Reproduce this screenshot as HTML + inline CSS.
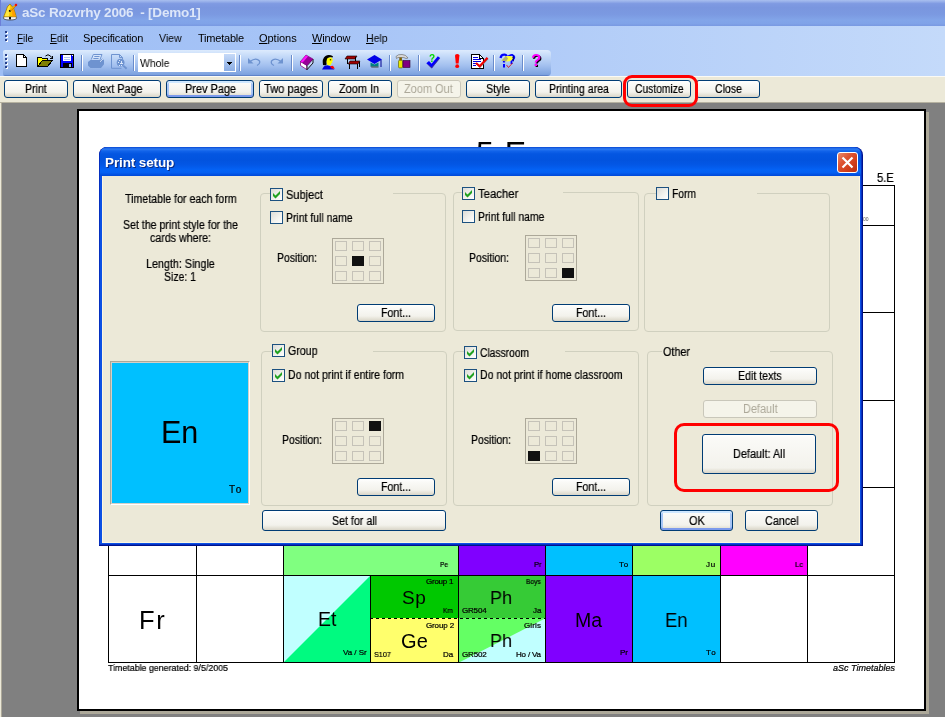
<!DOCTYPE html><html><head><meta charset="utf-8"><title>aSc Rozvrhy 2006 - [Demo1]</title><style>
html,body{margin:0;padding:0}
body{width:945px;height:717px;overflow:hidden;position:relative;background:#808080;font-family:"Liberation Sans",sans-serif;font-size:11px;color:#000}
div,svg{position:absolute;box-sizing:border-box}
.t{white-space:pre;will-change:transform}
.btn{border:1px solid #003C74;border-radius:3px;background:linear-gradient(#fff 0,#FAFAF7 3px,#F3F2EC calc(100% - 5px),#E9E7DD calc(100% - 3px),#D9D5C8 100%)}
.btn.dis{border-color:#C9C7BA;background:#F5F4EA}
.btn.def{box-shadow:inset 0 2px 0 0 #CEE7FF, inset 0 -2px 0 0 #7C9AEC, inset 2px 0 0 0 #A8C6F5, inset -2px 0 0 0 #A8C6F5}
.gb{border:1px solid #D0D0BF;border-radius:4px}
.cb{width:13px;height:13px;border:1px solid #1C5180;background:linear-gradient(135deg,#DCDCD7 0,#F3F3EF 60%,#fff 100%)}
.pg{border:1px solid #ACA899;background:#ECE9D8}
.pc{width:12px;height:10px;border:1px solid #C5C2B8}
.pc.on{background:#111;border-color:#111}
.sep{width:1px;background:#6A8CCB;box-shadow:1px 0 0 #fff}
</style></head><body><div style="left:0px;top:0px;width:945px;height:26px;background:linear-gradient(#A9BFEF 0,#98B0EA 6%,#7F9AE2 14%,#7A96DF 30%,#7B99E1 55%,#82A5E9 78%,#80A3E8 90%,#7999E2 100%)"></div><div style="left:0px;top:0px;width:1px;height:26px;background:#6C7FD8"></div><svg style="left:0;top:0" width="24" height="26" viewBox="0 0 24 26">
<path d="M3.4 17.8 Q3.2 20 10 20 Q16.8 20 16.6 17.8 L15 16 H5 Z" fill="#F4F4F4" stroke="#303030" stroke-width="0.7"/>
<path d="M10 4 L7.5 6.5 L5.6 12 L3.6 16.8 H16.3 L15 12.5 L13.6 8.2 Z" fill="#FFC400" stroke="#8A6A00" stroke-width="0.6"/>
<path d="M10 4.5 L8 7 L6.2 12 L4.6 16.2 H9 Z" fill="#FFE840"/>
<path d="M12 9 L13.3 8.6 L14.6 12.6 L15.8 16.4 H12.5 Z" fill="#FF9C00"/>
<rect x="9" y="17" width="2" height="2.4" fill="#111"/>
<path d="M9.8 10.8 L15.6 5.2" stroke="#F0A800" stroke-width="1.7"/>
<path d="M10.4 11.4 L16.2 5.8" stroke="#A06000" stroke-width="0.5"/>
<circle cx="16" cy="4.9" r="1.25" fill="#F01010"/>
<path d="M8.9 10.3 Q9.2 9.6 10.3 10.2 L10.8 11.6 Q9.6 12.2 8.9 11.4 Z" fill="#000"/>
</svg><div class="t" style="left:21.79px;top:5.32px;height:16px;line-height:16px;font-size:13.5px;color:#DCE6F9;letter-spacing:-0.224px;font-weight:bold;">aSc Rozvrhy 2006  - [Demo1]</div><div style="left:0px;top:26px;width:945px;height:50px;background:linear-gradient(90deg,#9EBEF5 0,#A9C6F7 40%,#C4DAFA 100%)"></div><div style="left:5px;top:31px;width:2px;height:2px;background:#27418C;box-shadow:1px 1px 0 #fff"></div><div style="left:5px;top:35px;width:2px;height:2px;background:#27418C;box-shadow:1px 1px 0 #fff"></div><div style="left:5px;top:39px;width:2px;height:2px;background:#27418C;box-shadow:1px 1px 0 #fff"></div><div class="t" style="left:17.34px;top:31.69px;height:13px;line-height:13px;font-size:11px;color:#000;transform:scaleX(0.9138);transform-origin:left center;"><u>F</u>ile</div><div class="t" style="left:49.54px;top:31.69px;height:13px;line-height:13px;font-size:11px;color:#000;transform:scaleX(0.9402);transform-origin:left center;"><u>E</u>dit</div><div class="t" style="left:83.34px;top:31.69px;height:13px;line-height:13px;font-size:11px;color:#000;letter-spacing:-0.165px;">Specification</div><div class="t" style="left:159.14px;top:31.69px;height:13px;line-height:13px;font-size:11px;color:#000;transform:scaleX(0.9576);transform-origin:left center;">View</div><div class="t" style="left:197.54px;top:31.69px;height:13px;line-height:13px;font-size:11px;color:#000;letter-spacing:-0.211px;">Timetable</div><div class="t" style="left:258.94px;top:31.69px;height:13px;line-height:13px;font-size:11px;color:#000;letter-spacing:-0.037px;"><u>O</u>ptions</div><div class="t" style="left:312.04px;top:31.69px;height:13px;line-height:13px;font-size:11px;color:#000;letter-spacing:-0.145px;"><u>W</u>indow</div><div class="t" style="left:366.04px;top:31.69px;height:13px;line-height:13px;font-size:11px;color:#000;transform:scaleX(0.9570);transform-origin:left center;"><u>H</u>elp</div><div style="left:3px;top:50px;width:548px;height:26px;border-radius:2px 4px 4px 2px;background:linear-gradient(#DDEBFD 0,#C3D9F8 25%,#A3C0EF 60%,#82A6E1 90%,#7A9EDC 96%,#5F83C9 97%,#5F83C9 100%)"></div><div style="left:5px;top:54px;width:2px;height:2px;background:#27418C;box-shadow:1px 1px 0 #fff"></div><div style="left:5px;top:58px;width:2px;height:2px;background:#27418C;box-shadow:1px 1px 0 #fff"></div><div style="left:5px;top:62px;width:2px;height:2px;background:#27418C;box-shadow:1px 1px 0 #fff"></div><div style="left:5px;top:66px;width:2px;height:2px;background:#27418C;box-shadow:1px 1px 0 #fff"></div><div class="sep" style="left:81px;top:55px;width:1px;height:16px;"></div><div class="sep" style="left:133px;top:55px;width:1px;height:16px;"></div><div class="sep" style="left:239px;top:55px;width:1px;height:16px;"></div><div class="sep" style="left:291px;top:55px;width:1px;height:16px;"></div><div class="sep" style="left:389px;top:55px;width:1px;height:16px;"></div><div class="sep" style="left:418px;top:55px;width:1px;height:16px;"></div><div class="sep" style="left:493px;top:55px;width:1px;height:16px;"></div><div class="sep" style="left:522px;top:55px;width:1px;height:16px;"></div><svg style="left:0;top:50px" width="560" height="26" viewBox="0 50 560 26" shape-rendering="crispEdges">
<!-- new -->
<path d="M16.5 54.5 H23.5 L26.5 57.5 V66.5 H16.5 Z" fill="#fff" stroke="#000"/>
<path d="M23.5 54.5 V57.5 H26.5" fill="none" stroke="#000"/>
<!-- open -->
<path d="M37.5 66.5 V57.5 H41.5 L42.5 58.5 H47.5 V60.5" fill="#FFFF00" stroke="#000"/>
<path d="M38 66 V58 H41 L42 59 H47 V61 H42 L38 66Z" fill="#FFFF00"/>
<path d="M37.5 66.5 L42.5 60.5 H52.5 L47.5 66.5 Z" fill="#808000" stroke="#000"/>
<path d="M45.5 56 Q48 53.5 50.5 56 L51.5 57.5" fill="none" stroke="#000" shape-rendering="auto"/>
<path d="M49.5 58.5 H52.5 V55.5" fill="none" stroke="#000"/>
<!-- save -->
<rect x="60.5" y="54.5" width="13" height="13" fill="#0000FF" stroke="#000"/>
<rect x="63" y="55" width="8" height="6" fill="#fff"/>
<rect x="64" y="57" width="6" height="1" fill="#B0C4F0"/><rect x="64" y="59" width="6" height="1" fill="#B0C4F0"/>
<rect x="63" y="63" width="9" height="4" fill="#000"/>
<rect x="69" y="64" width="2" height="3" fill="#8AB0F0"/>
<rect x="72" y="55" width="1" height="1" fill="#fff"/>
<!-- print (disabled) -->
<g fill="#6E93D0" shape-rendering="auto">
<path d="M91.3 59.5 L93.3 54.5 H102 L100 59.5" fill="#D5E4FA" stroke="#6E93D0" stroke-width="1"/>
<path d="M94.3 56.5 H99.5 M93.4 58.5 H98.6" stroke="#6E93D0" stroke-width="1"/>
<path d="M88 62 L90.5 60 H100 L102.5 58.6 L104 60.3 V64.3 L101 68 H90.5 L88 65.6 Z"/>
</g>
<path d="M100 61.8 L103.2 58.8" stroke="#DCE8FB" stroke-width="0.9" shape-rendering="auto"/>
<!-- preview (disabled) -->
<g shape-rendering="auto" fill="none" stroke="#6E93D0">
<path d="M111.5 54.5 H119.5 L122.5 57.5 V59.5 M111.5 54.5 V68.3 H121.5" />
<path d="M119.5 54.5 V57.5 H122.5"/>
<circle cx="120.6" cy="62.6" r="3.9" fill="#6E93D0" stroke="none"/>
<path d="M123.3 65.6 L126.6 68.8" stroke-width="1.9"/>
</g>
<g fill="#DCE8FB"><rect x="119" y="60" width="1" height="1"/><rect x="121" y="61" width="1" height="2"/><rect x="118" y="62" width="1" height="1"/><rect x="120" y="63" width="2" height="1"/><rect x="122" y="63" width="1" height="1"/><rect x="119" y="65" width="1" height="1"/><rect x="121" y="65" width="1" height="1"/></g>
<!-- undo / redo (disabled) -->
<g shape-rendering="auto" fill="none" stroke="#6E93D0" stroke-width="1.3">
<path d="M250 61.5 Q256 57 259.5 61 Q260.5 64 257 65.5"/>
<path d="M248 58 V63.5 H253.5 Z" fill="#6E93D0" stroke="none"/>
<path d="M281 61.5 Q275 57 271.5 61 Q270.5 64 274 65.5"/>
<path d="M283 58 V63.5 H277.5 Z" fill="#6E93D0" stroke="none"/>
</g>
<!-- book -->
<g shape-rendering="auto">
<path d="M300.5 61.5 L307 65.5 V69.7 L300.5 65.5 Z" fill="#fff" stroke="#8B008B" stroke-width="0.8"/>
<path d="M307 65.5 L313 59 V63 L307 69.7 Z" fill="#C5D6F5" stroke="#000" stroke-width="0.9"/>
<path d="M306 55 L313 59 L307 65.5 L300.5 61.5 Z" fill="#990099" stroke="#7A007A" stroke-width="0.6"/>
<path d="M306 55.3 L300.8 61.4 L302.6 62.5 L308 56.4 Z" fill="#FF10FF"/>
</g>
<!-- teacher -->
<g shape-rendering="auto">
<path d="M323 65 Q321.8 58.5 325.5 56 Q329 54 333 56.3 L332.5 57.6 Q328.5 56.5 327 59.5 L326.3 65.5 Z" fill="#000"/>
<path d="M327 58.8 Q329.5 56.8 331.8 57.8 L333 60.5 L332 61.2 L332.6 62.6 L331.3 63 L331 65 L327.5 65.5 L326.5 62 Z" fill="#FFFF00"/>
<path d="M329.8 59.3 h1.4 v1 h-1.4z" fill="#000"/>
<path d="M322 69.5 L324 66.3 L327.5 65.3 L331 66.5 L334.5 69.5 Z" fill="#0000E0"/>
<path d="M330 66.3 L333 65.8 L334.8 68.8 L331.5 68.6 Z" fill="#FF0000"/>
</g>
<!-- desks -->
<path d="M347 56 H357 L355 59 H345 Z" fill="#A00000" stroke="#000" stroke-width="0.6" shape-rendering="auto"/>
<path d="M350 61 H360 L358 64 H348 Z" fill="#A00000" stroke="#000" stroke-width="0.6" shape-rendering="auto"/>
<rect x="347" y="59" width="1" height="5" fill="#000"/><rect x="355" y="57" width="1" height="4" fill="#000"/>
<rect x="349" y="64" width="1" height="5" fill="#000"/><rect x="357" y="64" width="1" height="5" fill="#000"/><rect x="359" y="62" width="1" height="5" fill="#000"/>
<!-- grad cap -->
<g shape-rendering="auto">
<path d="M367 59.5 L374.5 55 L382 59.5 L374.5 64 Z" fill="#0000E8"/>
<path d="M370.5 62.5 V66.5 H378.5 V62.5 L374.5 64.6 Z" fill="#008080"/>
<path d="M370.5 66.5 H378.5 V67.5 H371.5 Z" fill="#404040"/>
<path d="M381 60 V67" stroke="#000090" stroke-width="1"/>
</g>
<!-- hammer + box -->
<g shape-rendering="auto">
<path d="M396 56.5 Q398 54 402 54.5 Q406 54.5 408 58 L406 58.5 Q404 57 401 57.5 L398 57.5 L396.5 58.5 Z" fill="#D8D8D8" stroke="#606060" stroke-width="0.6"/>
<rect x="399.3" y="57.5" width="2.6" height="3" fill="#806000"/>
<rect x="398.5" y="60.3" width="4" height="7.6" rx="1" fill="#E8E800" stroke="#505000" stroke-width="0.6"/>
<rect x="403" y="60.5" width="7" height="7" fill="#800080" stroke="#300030" stroke-width="0.6"/>
</g>
<!-- check with ? -->
<g shape-rendering="auto">
<path d="M426.3 63.3 L429 61 L431.6 63.8 L437.8 56.3 L440.2 58 L431.8 68.6 Z" fill="#0000FF"/>
<path d="M428 64.5 L431.5 68 L439.5 58.5" stroke="#806020" stroke-width="0.5" fill="none"/>
</g>
<!-- exclamation -->
<g shape-rendering="auto" fill="#FF0000">
<path d="M455 55.6 Q455 54 457.2 54 Q459.4 54 459.4 55.6 L458.6 63.6 H455.8 Z"/>
<circle cx="457.2" cy="66.2" r="1.9"/>
</g>
<!-- doc with check -->
<path d="M471.5 54.5 H479.5 L483.5 58.5 V68.5 H471.5 Z" fill="#fff" stroke="#000"/>
<path d="M479.5 54.5 V58.5 H483.5" fill="none" stroke="#000"/>
<path d="M473 57.5 H478 M473 59.5 H481 M473 61.5 H481 M473 63.5 H477 M473 65.5 H476" stroke="#0000E0"/>
<path d="M476.5 63.8 L480 67 L488 58.5" fill="none" stroke="#808080" stroke-width="1.4" shape-rendering="auto"/><path d="M476 63 L479.7 66.3 L487.5 57.8" fill="none" stroke="#F00000" stroke-width="2.1" shape-rendering="auto"/>
<!-- misc icon -->
<g shape-rendering="auto">
<path d="M500.5 58 Q501 54.5 504.5 54.5 Q507.5 55 506.5 58 L504 60.5 V62.5" fill="none" stroke="#0000FF" stroke-width="2.2"/>
<path d="M508 57 Q510 54.5 512.5 55 Q515 56 514 58.5 L511.5 61 V64" fill="none" stroke="#0000FF" stroke-width="1.8"/>
<rect x="503" y="64" width="2" height="3.5" fill="#0000FF"/>
<path d="M514 55 V62 L511.5 58 Z" fill="#000090"/>
<path d="M501.5 60.5 L506 56 H510.5 L513 58 L511.5 60.5 L507.5 61.5 Z" fill="#FFFF30"/>
<path d="M501.5 60.5 L506 56 L508 58.5 L506 61.5Z" fill="#B0B070"/>
<path d="M506.5 65 L508.5 67.5 L512.5 63" fill="none" stroke="#E00000" stroke-width="0.8"/>
</g>
</svg><div class="t" style="left:429.20px;top:52.53px;height:12px;line-height:12px;font-size:10px;color:#00D800;font-weight:bold;">?</div><div class="t" style="left:531.98px;top:52.11px;height:20px;line-height:20px;font-size:17px;color:#000;font-weight:bold;">?</div><div class="t" style="left:530.98px;top:51.11px;height:20px;line-height:20px;font-size:17px;color:#FF00FF;font-weight:bold;">?</div><div style="left:138px;top:53px;width:98px;height:19px;background:#fff"></div><div style="left:224px;top:54px;width:11px;height:17px;background:linear-gradient(#C6DAF8,#8BADE4)"></div><svg style="left:227px;top:62px" width="5" height="3" viewBox="0 0 5 3" shape-rendering="crispEdges"><path d="M0 0H5L2.5 3Z" fill="#000"/></svg><div class="t" style="left:139.84px;top:56.69px;height:13px;line-height:13px;font-size:11px;color:#000;transform:scaleX(0.9472);transform-origin:left center;">Whole</div><div style="left:0px;top:76px;width:945px;height:27px;background:#ECE9D8;border-top:1px solid #FBFAF4;border-bottom:1px solid #B5B1A0"></div><div class="btn" style="left:4px;top:80px;width:64px;height:18px;"></div><div class="t" style="left:24.93px;top:81.84px;height:14px;line-height:14px;font-size:12px;color:#000;transform:scaleX(0.8813);transform-origin:left center;-webkit-text-stroke:0.22px #000;">Print</div><div class="btn" style="left:73px;top:80px;width:88px;height:18px;"></div><div class="t" style="left:91.93px;top:81.84px;height:14px;line-height:14px;font-size:12px;color:#000;transform:scaleX(0.9025);transform-origin:left center;-webkit-text-stroke:0.22px #000;">Next Page</div><div class="btn def" style="left:166px;top:80px;width:88px;height:18px;"></div><div class="t" style="left:184.68px;top:81.84px;height:14px;line-height:14px;font-size:12px;color:#000;transform:scaleX(0.9116);transform-origin:left center;-webkit-text-stroke:0.22px #000;">Prev Page</div><div class="btn" style="left:259px;top:80px;width:64px;height:18px;"></div><div class="t" style="left:264.08px;top:81.84px;height:14px;line-height:14px;font-size:12px;color:#000;transform:scaleX(0.9253);transform-origin:left center;-webkit-text-stroke:0.22px #000;">Two pages</div><div class="btn" style="left:328px;top:80px;width:64px;height:18px;"></div><div class="t" style="left:339.08px;top:81.84px;height:14px;line-height:14px;font-size:12px;color:#000;transform:scaleX(0.9109);transform-origin:left center;-webkit-text-stroke:0.22px #000;">Zoom In</div><div class="btn dis" style="left:397px;top:80px;width:64px;height:18px;"></div><div class="t" style="left:403.73px;top:81.84px;height:14px;line-height:14px;font-size:12px;color:#ACA899;transform:scaleX(0.9145);transform-origin:left center;">Zoom Out</div><div class="btn" style="left:466px;top:80px;width:64px;height:18px;"></div><div class="t" style="left:485.73px;top:81.84px;height:14px;line-height:14px;font-size:12px;color:#000;transform:scaleX(0.8985);transform-origin:left center;-webkit-text-stroke:0.22px #000;">Style</div><div class="btn" style="left:535px;top:80px;width:87px;height:18px;"></div><div class="t" style="left:548.63px;top:81.84px;height:14px;line-height:14px;font-size:12px;color:#000;transform:scaleX(0.8811);transform-origin:left center;-webkit-text-stroke:0.22px #000;">Printing area</div><div class="btn" style="left:627px;top:80px;width:64px;height:18px;"></div><div class="t" style="left:634.88px;top:81.84px;height:14px;line-height:14px;font-size:12px;color:#000;transform:scaleX(0.8579);transform-origin:left center;-webkit-text-stroke:0.22px #000;">Customize</div><div class="btn" style="left:696px;top:80px;width:64px;height:18px;"></div><div class="t" style="left:714.83px;top:81.84px;height:14px;line-height:14px;font-size:12px;color:#000;transform:scaleX(0.8783);transform-origin:left center;-webkit-text-stroke:0.22px #000;">Close</div><div style="left:0px;top:103px;width:2px;height:614px;background:#ECE9D8"></div><div style="left:1px;top:103px;width:1px;height:614px;background:#ACA899"></div><div style="left:80px;top:112px;width:849px;height:602px;background:#ACA899"></div><div style="left:77px;top:109px;width:849px;height:602px;background:#fff;border:2px solid #000"></div><div class="t" style="left:476.08px;top:133.91px;height:38px;line-height:38px;font-size:32px;color:#000;letter-spacing:1.084px;">5.E</div><div class="t" style="left:876.88px;top:170.84px;height:14px;line-height:14px;font-size:12px;color:#000;transform:scaleX(0.9277);transform-origin:left center;-webkit-text-stroke:0.22px #000;">5.E</div><div class="t" style="left:863.20px;top:216.27px;height:6px;line-height:6px;font-size:5px;color:#555;letter-spacing:-0.062px;">00</div><div style="left:283px;top:540px;width:176px;height:36px;background:#80FF80;"></div><div style="left:458px;top:540px;width:88px;height:36px;background:#8000FF;"></div><div style="left:545px;top:540px;width:88px;height:36px;background:#00C0FF;"></div><div style="left:632px;top:540px;width:89px;height:36px;background:#9CFF64;"></div><div style="left:720px;top:540px;width:88px;height:36px;background:#FF00FF;"></div><div style="left:283px;top:575px;width:88px;height:88px;background:#C0FFFF;"></div><svg style="left:283px;top:575px" width="88" height="88" viewBox="0 0 88 88"><path d="M88 0 V88 H0 Z" fill="#00FA80"/></svg><div style="left:370px;top:575px;width:89px;height:44px;background:#00C800;"></div><div style="left:370px;top:618px;width:89px;height:45px;background:#FFFF6C;"></div><div style="left:458px;top:575px;width:88px;height:44px;background:#36CB36;"></div><div style="left:458px;top:618px;width:88px;height:45px;background:#64FF64;"></div><svg style="left:458px;top:618px" width="88" height="45" viewBox="0 0 88 45"><path d="M88 0 V45 H0 Z" fill="#C0FFFF"/></svg><div style="left:545px;top:575px;width:88px;height:88px;background:#8000FF;"></div><div style="left:632px;top:575px;width:89px;height:88px;background:#00C0FF;"></div><div style="left:108px;top:185px;width:1px;height:478px;background:#000"></div><div style="left:196px;top:185px;width:1px;height:478px;background:#000"></div><div style="left:283px;top:185px;width:1px;height:478px;background:#000"></div><div style="left:370px;top:575px;width:1px;height:88px;background:#000"></div><div style="left:458px;top:185px;width:1px;height:478px;background:#000"></div><div style="left:545px;top:185px;width:1px;height:478px;background:#000"></div><div style="left:632px;top:185px;width:1px;height:478px;background:#000"></div><div style="left:720px;top:185px;width:1px;height:478px;background:#000"></div><div style="left:807px;top:185px;width:1px;height:478px;background:#000"></div><div style="left:894px;top:185px;width:1px;height:478px;background:#000"></div><div style="left:108px;top:185px;width:787px;height:1px;background:#000"></div><div style="left:108px;top:225px;width:787px;height:1px;background:#000"></div><div style="left:108px;top:312px;width:787px;height:1px;background:#000"></div><div style="left:108px;top:400px;width:787px;height:1px;background:#000"></div><div style="left:108px;top:487px;width:787px;height:1px;background:#000"></div><div style="left:108px;top:575px;width:787px;height:1px;background:#000"></div><div style="left:108px;top:662px;width:787px;height:1px;background:#000"></div><div style="left:370px;top:618px;width:176px;height:1px;background:repeating-linear-gradient(90deg,#000 0 3px,transparent 3px 6px)"></div><div class="t" style="left:139.17px;top:604.66px;height:31px;line-height:31px;font-size:25.5px;color:#000;letter-spacing:1.772px;">Fr</div><div class="t" style="left:317.53px;top:608.24px;height:23px;line-height:23px;font-size:19.5px;color:#000;letter-spacing:0.013px;">Et</div><div class="t" style="left:401.86px;top:586.22px;height:23px;line-height:23px;font-size:19px;color:#000;letter-spacing:0.650px;">Sp</div><div class="t" style="left:400.80px;top:628.57px;height:24px;line-height:24px;font-size:20px;color:#000;letter-spacing:0.312px;">Ge</div><div class="t" style="left:489.56px;top:586.22px;height:23px;line-height:23px;font-size:19px;color:#000;transform:scaleX(0.9461);transform-origin:left center;">Ph</div><div class="t" style="left:489.56px;top:629.42px;height:23px;line-height:23px;font-size:19px;color:#000;transform:scaleX(0.9461);transform-origin:left center;">Ph</div><div class="t" style="left:575.43px;top:608.74px;height:23px;line-height:23px;font-size:19.5px;color:#000;letter-spacing:-0.044px;">Ma</div><div class="t" style="left:664.53px;top:608.74px;height:23px;line-height:23px;font-size:19.5px;color:#000;transform:scaleX(0.9448);transform-origin:left center;">En</div><div class="t" style="left:440.22px;top:560.03px;height:10px;line-height:10px;font-size:8px;color:#000;transform:scaleX(0.8336);transform-origin:left center;-webkit-text-stroke:0.22px #000;">Pe</div><div class="t" style="left:533.52px;top:560.03px;height:10px;line-height:10px;font-size:8px;color:#000;transform:scaleX(0.9306);transform-origin:left center;-webkit-text-stroke:0.22px #000;">Pr</div><div class="t" style="left:618.82px;top:560.03px;height:10px;line-height:10px;font-size:8px;color:#000;letter-spacing:0.847px;-webkit-text-stroke:0.22px #000;">To</div><div class="t" style="left:706.12px;top:560.03px;height:10px;line-height:10px;font-size:8px;color:#000;letter-spacing:0.647px;-webkit-text-stroke:0.22px #000;">Ju</div><div class="t" style="left:795.22px;top:560.03px;height:10px;line-height:10px;font-size:8px;color:#000;transform:scaleX(0.9408);transform-origin:left center;-webkit-text-stroke:0.22px #000;">Lc</div><div class="t" style="left:342.52px;top:647.73px;height:10px;line-height:10px;font-size:8px;color:#000;letter-spacing:-0.027px;-webkit-text-stroke:0.22px #000;">Va / Sr</div><div class="t" style="left:425.52px;top:576.93px;height:10px;line-height:10px;font-size:8px;color:#000;letter-spacing:-0.251px;-webkit-text-stroke:0.22px #000;">Group 1</div><div class="t" style="left:425.52px;top:620.93px;height:10px;line-height:10px;font-size:8px;color:#000;letter-spacing:-0.134px;-webkit-text-stroke:0.22px #000;">Group 2</div><div class="t" style="left:442.52px;top:605.93px;height:10px;line-height:10px;font-size:8px;color:#000;transform:scaleX(0.8214);transform-origin:left center;-webkit-text-stroke:0.22px #000;">Km</div><div class="t" style="left:443.32px;top:650.03px;height:10px;line-height:10px;font-size:8px;color:#000;letter-spacing:0.066px;-webkit-text-stroke:0.22px #000;">Da</div><div class="t" style="left:374.32px;top:650.03px;height:10px;line-height:10px;font-size:8px;color:#000;transform:scaleX(0.9057);transform-origin:left center;-webkit-text-stroke:0.22px #000;">S107</div><div class="t" style="left:525.52px;top:576.93px;height:10px;line-height:10px;font-size:8px;color:#000;transform:scaleX(0.8354);transform-origin:left center;-webkit-text-stroke:0.22px #000;">Boys</div><div class="t" style="left:523.52px;top:620.93px;height:10px;line-height:10px;font-size:8px;color:#000;letter-spacing:0.137px;-webkit-text-stroke:0.22px #000;">Girls</div><div class="t" style="left:461.52px;top:605.93px;height:10px;line-height:10px;font-size:8px;color:#000;letter-spacing:-0.190px;-webkit-text-stroke:0.22px #000;">GR504</div><div class="t" style="left:461.52px;top:649.93px;height:10px;line-height:10px;font-size:8px;color:#000;letter-spacing:-0.140px;-webkit-text-stroke:0.22px #000;">GR502</div><div class="t" style="left:532.72px;top:605.93px;height:10px;line-height:10px;font-size:8px;color:#000;letter-spacing:0.047px;-webkit-text-stroke:0.22px #000;">Ja</div><div class="t" style="left:516.42px;top:649.93px;height:10px;line-height:10px;font-size:8px;color:#000;letter-spacing:-0.182px;-webkit-text-stroke:0.22px #000;">Ho / Va</div><div class="t" style="left:620.32px;top:647.73px;height:10px;line-height:10px;font-size:8px;color:#000;letter-spacing:-0.100px;-webkit-text-stroke:0.22px #000;">Pr</div><div class="t" style="left:706.02px;top:647.73px;height:10px;line-height:10px;font-size:8px;color:#000;letter-spacing:1.147px;-webkit-text-stroke:0.22px #000;">To</div><div class="t" style="left:108.03px;top:662.21px;height:11px;line-height:11px;font-size:9.5px;color:#000;transform:scaleX(0.9298);transform-origin:left center;-webkit-text-stroke:0.22px #000;">Timetable generated: 9/5/2005</div><div class="t" style="left:833.26px;top:662.98px;height:11px;line-height:11px;font-size:9px;color:#000;letter-spacing:-0.004px;font-style:italic;-webkit-text-stroke:0.22px #000;">aSc Timetables</div><div style="left:99px;top:147px;width:764px;height:399px;background:#00138C;border-radius:8px 8px 0 0"></div><div style="left:99px;top:147px;width:763px;height:398px;background:#0530C0;border-radius:8px 7px 0 0"></div><div style="left:100px;top:148px;width:761px;height:396px;background:#0C50E4;border-radius:7px 6px 0 0"></div><div style="left:100px;top:147px;width:761px;height:29px;border-radius:7px 7px 0 0;background:linear-gradient(#0747D3 0,#2D7BF2 7%,#1163EA 14%,#0456E1 24%,#0253DE 45%,#0357E6 62%,#0463F6 80%,#0560F2 88%,#0048D8 100%)"></div><div style="left:102px;top:176px;width:758px;height:367px;background:#FBF6E0"></div><div style="left:103px;top:176px;width:756px;height:366px;background:#ECE9D8"></div><div class="t" style="left:105.99px;top:156.32px;height:16px;line-height:16px;font-size:13.5px;color:#0A2A80;letter-spacing:-0.117px;font-weight:bold;">Print setup</div><div class="t" style="left:104.99px;top:155.32px;height:16px;line-height:16px;font-size:13.5px;color:#fff;letter-spacing:-0.117px;font-weight:bold;">Print setup</div><div style="left:837px;top:152px;width:21px;height:21px;border:1px solid #fff;border-radius:3px;background:linear-gradient(135deg,#EA8A6C 0,#DE5533 35%,#D3401C 65%,#B82E10 100%)"></div><svg style="left:837px;top:152px" width="21" height="21" viewBox="0 0 21 21"><path d="M5.5 5.5 L15.5 15.5 M15.5 5.5 L5.5 15.5" stroke="#fff" stroke-width="2.2" stroke-linecap="butt"/></svg><div class="t" style="left:124.98px;top:191.84px;height:14px;line-height:14px;font-size:12px;color:#000;transform:scaleX(0.8842);transform-origin:left center;-webkit-text-stroke:0.22px #000;">Timetable for each form</div><div class="t" style="left:122.68px;top:217.84px;height:14px;line-height:14px;font-size:12px;color:#000;transform:scaleX(0.8830);transform-origin:left center;-webkit-text-stroke:0.22px #000;">Set the print style for the</div><div class="t" style="left:149.83px;top:230.84px;height:14px;line-height:14px;font-size:12px;color:#000;transform:scaleX(0.8874);transform-origin:left center;-webkit-text-stroke:0.22px #000;">cards where:</div><div class="t" style="left:145.93px;top:256.84px;height:14px;line-height:14px;font-size:12px;color:#000;transform:scaleX(0.8963);transform-origin:left center;-webkit-text-stroke:0.22px #000;">Length: Single</div><div class="t" style="left:163.63px;top:269.84px;height:14px;line-height:14px;font-size:12px;color:#000;transform:scaleX(0.8707);transform-origin:left center;-webkit-text-stroke:0.22px #000;">Size: 1</div><div style="left:110px;top:361px;width:140px;height:144px;border:1px solid #ACA899;border-right-color:#fff;border-bottom-color:#fff"></div><div style="left:111px;top:362px;width:138px;height:142px;border:1px solid #D4D0C8;background:#00C0FF"></div><div style="left:112px;top:363px;width:136px;height:140px;background:#00C0FF"></div><div class="t" style="left:160.67px;top:413.93px;height:37px;line-height:37px;font-size:30.5px;color:#000;letter-spacing:-0.062px;">En</div><div class="t" style="left:228.60px;top:483.54px;height:12px;line-height:12px;font-size:10px;color:#000;letter-spacing:1.637px;-webkit-text-stroke:0.22px #000;">To</div><div class="gb" style="left:260px;top:193px;width:186px;height:139px;"></div><div style="left:270px;top:193px;width:123px;height:1px;background:#ECE9D8"></div><div class="cb" style="left:270px;top:188px;width:13px;height:13px;"></div><svg style="left:270px;top:188px" width="13" height="13" viewBox="0 0 13 13"><path d="M3 5 L5.5 7.5 L10 3 V6 L5.5 10.5 L3 8 Z" fill="#21A121"/></svg><div class="t" style="left:285.98px;top:187.84px;height:14px;line-height:14px;font-size:12px;color:#000;transform:scaleX(0.9194);transform-origin:left center;-webkit-text-stroke:0.22px #000;">Subject</div><div class="cb" style="left:270px;top:211px;width:13px;height:13px;"></div><div class="t" style="left:285.98px;top:210.84px;height:14px;line-height:14px;font-size:12px;color:#000;transform:scaleX(0.8688);transform-origin:left center;-webkit-text-stroke:0.22px #000;">Print full name</div><div class="t" style="left:276.78px;top:250.84px;height:14px;line-height:14px;font-size:12px;color:#000;transform:scaleX(0.8699);transform-origin:left center;-webkit-text-stroke:0.22px #000;">Position:</div><div class="pg" style="left:332px;top:238px;width:52px;height:46px;"></div><div class="pc" style="left:335px;top:241px;width:12px;height:10px;"></div><div class="pc" style="left:352px;top:241px;width:12px;height:10px;"></div><div class="pc" style="left:369px;top:241px;width:12px;height:10px;"></div><div class="pc" style="left:335px;top:256px;width:12px;height:10px;"></div><div class="pc on" style="left:352px;top:256px;width:12px;height:10px;"></div><div class="pc" style="left:369px;top:256px;width:12px;height:10px;"></div><div class="pc" style="left:335px;top:271px;width:12px;height:10px;"></div><div class="pc" style="left:352px;top:271px;width:12px;height:10px;"></div><div class="pc" style="left:369px;top:271px;width:12px;height:10px;"></div><div class="btn" style="left:357px;top:304px;width:78px;height:18px;"></div><div class="t" style="left:380.78px;top:305.84px;height:14px;line-height:14px;font-size:12px;color:#000;transform:scaleX(0.8837);transform-origin:left center;-webkit-text-stroke:0.22px #000;">Font...</div><div class="gb" style="left:453px;top:192px;width:186px;height:139px;"></div><div style="left:462px;top:192px;width:101px;height:1px;background:#ECE9D8"></div><div class="cb" style="left:462px;top:187px;width:13px;height:13px;"></div><svg style="left:462px;top:187px" width="13" height="13" viewBox="0 0 13 13"><path d="M3 5 L5.5 7.5 L10 3 V6 L5.5 10.5 L3 8 Z" fill="#21A121"/></svg><div class="t" style="left:478.28px;top:186.84px;height:14px;line-height:14px;font-size:12px;color:#000;transform:scaleX(0.9445);transform-origin:left center;-webkit-text-stroke:0.22px #000;">Teacher</div><div class="cb" style="left:462px;top:210px;width:13px;height:13px;"></div><div class="t" style="left:478.28px;top:209.84px;height:14px;line-height:14px;font-size:12px;color:#000;transform:scaleX(0.8649);transform-origin:left center;-webkit-text-stroke:0.22px #000;">Print full name</div><div class="t" style="left:468.98px;top:250.84px;height:14px;line-height:14px;font-size:12px;color:#000;transform:scaleX(0.8699);transform-origin:left center;-webkit-text-stroke:0.22px #000;">Position:</div><div class="pg" style="left:525px;top:235px;width:52px;height:46px;"></div><div class="pc" style="left:528px;top:238px;width:12px;height:10px;"></div><div class="pc" style="left:545px;top:238px;width:12px;height:10px;"></div><div class="pc" style="left:562px;top:238px;width:12px;height:10px;"></div><div class="pc" style="left:528px;top:253px;width:12px;height:10px;"></div><div class="pc" style="left:545px;top:253px;width:12px;height:10px;"></div><div class="pc" style="left:562px;top:253px;width:12px;height:10px;"></div><div class="pc" style="left:528px;top:268px;width:12px;height:10px;"></div><div class="pc" style="left:545px;top:268px;width:12px;height:10px;"></div><div class="pc on" style="left:562px;top:268px;width:12px;height:10px;"></div><div class="btn" style="left:552px;top:304px;width:78px;height:18px;"></div><div class="t" style="left:575.78px;top:305.84px;height:14px;line-height:14px;font-size:12px;color:#000;transform:scaleX(0.8837);transform-origin:left center;-webkit-text-stroke:0.22px #000;">Font...</div><div class="gb" style="left:644px;top:193px;width:186px;height:139px;"></div><div style="left:656px;top:193px;width:101px;height:1px;background:#ECE9D8"></div><div class="cb" style="left:656px;top:187px;width:13px;height:13px;"></div><div class="t" style="left:672.08px;top:186.84px;height:14px;line-height:14px;font-size:12px;color:#000;transform:scaleX(0.8582);transform-origin:left center;-webkit-text-stroke:0.22px #000;">Form</div><div class="gb" style="left:261px;top:351px;width:186px;height:155px;"></div><div style="left:272px;top:351px;width:101px;height:1px;background:#ECE9D8"></div><div class="cb" style="left:272px;top:344px;width:13px;height:13px;"></div><svg style="left:272px;top:344px" width="13" height="13" viewBox="0 0 13 13"><path d="M3 5 L5.5 7.5 L10 3 V6 L5.5 10.5 L3 8 Z" fill="#21A121"/></svg><div class="t" style="left:287.88px;top:343.84px;height:14px;line-height:14px;font-size:12px;color:#000;transform:scaleX(0.8862);transform-origin:left center;-webkit-text-stroke:0.22px #000;">Group</div><div class="cb" style="left:272px;top:369px;width:13px;height:13px;"></div><svg style="left:272px;top:369px" width="13" height="13" viewBox="0 0 13 13"><path d="M3 5 L5.5 7.5 L10 3 V6 L5.5 10.5 L3 8 Z" fill="#21A121"/></svg><div class="t" style="left:287.88px;top:367.84px;height:14px;line-height:14px;font-size:12px;color:#000;transform:scaleX(0.8788);transform-origin:left center;-webkit-text-stroke:0.22px #000;">Do not print if entire form</div><div class="t" style="left:282.08px;top:432.84px;height:14px;line-height:14px;font-size:12px;color:#000;transform:scaleX(0.8699);transform-origin:left center;-webkit-text-stroke:0.22px #000;">Position:</div><div class="pg" style="left:332px;top:418px;width:52px;height:46px;"></div><div class="pc" style="left:335px;top:421px;width:12px;height:10px;"></div><div class="pc" style="left:352px;top:421px;width:12px;height:10px;"></div><div class="pc on" style="left:369px;top:421px;width:12px;height:10px;"></div><div class="pc" style="left:335px;top:436px;width:12px;height:10px;"></div><div class="pc" style="left:352px;top:436px;width:12px;height:10px;"></div><div class="pc" style="left:369px;top:436px;width:12px;height:10px;"></div><div class="pc" style="left:335px;top:451px;width:12px;height:10px;"></div><div class="pc" style="left:352px;top:451px;width:12px;height:10px;"></div><div class="pc" style="left:369px;top:451px;width:12px;height:10px;"></div><div class="btn" style="left:357px;top:478px;width:78px;height:18px;"></div><div class="t" style="left:380.78px;top:479.84px;height:14px;line-height:14px;font-size:12px;color:#000;transform:scaleX(0.8837);transform-origin:left center;-webkit-text-stroke:0.22px #000;">Font...</div><div class="btn" style="left:262px;top:510px;width:184px;height:21px;"></div><div class="t" style="left:331.78px;top:513.84px;height:14px;line-height:14px;font-size:12px;color:#000;transform:scaleX(0.8888);transform-origin:left center;-webkit-text-stroke:0.22px #000;">Set for all</div><div class="gb" style="left:453px;top:351px;width:186px;height:155px;"></div><div style="left:464px;top:351px;width:101px;height:1px;background:#ECE9D8"></div><div class="cb" style="left:464px;top:346px;width:13px;height:13px;"></div><svg style="left:464px;top:346px" width="13" height="13" viewBox="0 0 13 13"><path d="M3 5 L5.5 7.5 L10 3 V6 L5.5 10.5 L3 8 Z" fill="#21A121"/></svg><div class="t" style="left:480.08px;top:345.84px;height:14px;line-height:14px;font-size:12px;color:#000;transform:scaleX(0.8547);transform-origin:left center;-webkit-text-stroke:0.22px #000;">Classroom</div><div class="cb" style="left:464px;top:369px;width:13px;height:13px;"></div><svg style="left:464px;top:369px" width="13" height="13" viewBox="0 0 13 13"><path d="M3 5 L5.5 7.5 L10 3 V6 L5.5 10.5 L3 8 Z" fill="#21A121"/></svg><div class="t" style="left:480.08px;top:367.84px;height:14px;line-height:14px;font-size:12px;color:#000;transform:scaleX(0.8760);transform-origin:left center;-webkit-text-stroke:0.22px #000;">Do not print if home classroom</div><div class="t" style="left:470.78px;top:432.84px;height:14px;line-height:14px;font-size:12px;color:#000;transform:scaleX(0.8699);transform-origin:left center;-webkit-text-stroke:0.22px #000;">Position:</div><div class="pg" style="left:525px;top:418px;width:52px;height:46px;"></div><div class="pc" style="left:528px;top:421px;width:12px;height:10px;"></div><div class="pc" style="left:545px;top:421px;width:12px;height:10px;"></div><div class="pc" style="left:562px;top:421px;width:12px;height:10px;"></div><div class="pc" style="left:528px;top:436px;width:12px;height:10px;"></div><div class="pc" style="left:545px;top:436px;width:12px;height:10px;"></div><div class="pc" style="left:562px;top:436px;width:12px;height:10px;"></div><div class="pc on" style="left:528px;top:451px;width:12px;height:10px;"></div><div class="pc" style="left:545px;top:451px;width:12px;height:10px;"></div><div class="pc" style="left:562px;top:451px;width:12px;height:10px;"></div><div class="btn" style="left:552px;top:478px;width:78px;height:18px;"></div><div class="t" style="left:575.78px;top:479.84px;height:14px;line-height:14px;font-size:12px;color:#000;transform:scaleX(0.8837);transform-origin:left center;-webkit-text-stroke:0.22px #000;">Font...</div><div class="gb" style="left:647px;top:351px;width:186px;height:155px;"></div><div style="left:662px;top:351px;width:108px;height:1px;background:#ECE9D8"></div><div class="t" style="left:662.88px;top:344.84px;height:14px;line-height:14px;font-size:12px;color:#000;transform:scaleX(0.9023);transform-origin:left center;-webkit-text-stroke:0.22px #000;">Other</div><div class="btn" style="left:703px;top:367px;width:114px;height:18px;"></div><div class="t" style="left:738.13px;top:368.84px;height:14px;line-height:14px;font-size:12px;color:#000;transform:scaleX(0.8866);transform-origin:left center;-webkit-text-stroke:0.22px #000;">Edit texts</div><div class="btn dis" style="left:703px;top:400px;width:114px;height:18px;"></div><div class="t" style="left:742.73px;top:401.84px;height:14px;line-height:14px;font-size:12px;color:#ACA899;transform:scaleX(0.9096);transform-origin:left center;">Default</div><div class="btn" style="left:702px;top:434px;width:114px;height:40px;"></div><div class="t" style="left:732.78px;top:446.84px;height:14px;line-height:14px;font-size:12px;color:#000;transform:scaleX(0.9079);transform-origin:left center;-webkit-text-stroke:0.22px #000;">Default: All</div><div class="btn def" style="left:660px;top:510px;width:73px;height:21px;"></div><div class="t" style="left:688.68px;top:513.84px;height:14px;line-height:14px;font-size:12px;color:#000;transform:scaleX(0.9168);transform-origin:left center;-webkit-text-stroke:0.22px #000;">OK</div><div class="btn" style="left:745px;top:510px;width:73px;height:21px;"></div><div class="t" style="left:764.98px;top:513.84px;height:14px;line-height:14px;font-size:12px;color:#000;transform:scaleX(0.9016);transform-origin:left center;-webkit-text-stroke:0.22px #000;">Cancel</div><div style="left:623px;top:75px;width:75px;height:32px;border:3px solid #FF0000;border-radius:9px"></div><div style="left:674px;top:423px;width:165px;height:69px;border:3px solid #FF0000;border-radius:10px"></div></body></html>
